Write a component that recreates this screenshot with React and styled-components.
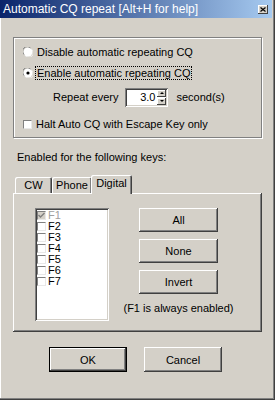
import React, { useState } from 'react';
import styled, { createGlobalStyle, css } from 'styled-components';

const Global = createGlobalStyle`
    html, body { margin: 0; padding: 0; background: #d4d0c8; }
    body { font-family: "Liberation Sans", Arial, sans-serif; font-size: 11px; color: #000; }
`;

const raised = css`
    box-shadow: inset -1px -1px #404040, inset 1px 1px #fff, inset -2px -2px #808080, inset 2px 2px #d4d0c8;
`;
const sunken = css`
    box-shadow: inset 1px 1px #808080, inset -1px -1px #fff, inset 2px 2px #404040, inset -2px -2px #d4d0c8;
`;

const Window = styled.div`
    width: 275px;
    height: 400px;
    box-sizing: border-box;
    background: #d4d0c8;
    display: flex;
    flex-direction: column;
    border-right: 1px solid #404040;
    border-bottom: 1px solid #404040;
    box-shadow: inset -1px -1px #808080, inset 1px 0 #fff;
`;

const TitleBar = styled.div`
    height: 18px;
    margin-right: 2px;
    background: linear-gradient(to right, #0a246a, #a6caf0);
    color: #fff;
    display: flex;
    align-items: center;
    justify-content: space-between;
    padding: 0 4px 0 3px;
    font-size: 12px;
    white-space: nowrap;
`;

const CloseBtn = styled.div`
    width: 10px;
    height: 9px;
    background: #d4d0c8;
    box-shadow: inset -1px -1px #404040, inset 1px 1px #fff;
    display: flex;
    align-items: center;
    justify-content: center;
    margin-top: 1px;
`;

const Body = styled.div`
    padding: 0 12px 0 13px;
    display: flex;
    flex-direction: column;
`;

const GroupBox = styled.div`
    margin-top: 19px;
    height: 101px;
    box-sizing: border-box;
    border: 1px solid #808080;
    box-shadow: inset 1px 1px #fff, 1px 1px #fff;
    padding: 4px 0 0 9px;
    display: flex;
    flex-direction: column;
`;

const Row = styled.div`
    height: 20px;
    display: flex;
    align-items: center;
    margin-top: ${({ top }) => top || 0}px;
    margin-left: ${({ indent }) => indent || 0}px;
`;

const Caption = styled.span`
    margin-left: 3px;
    padding: 0 1px;
    line-height: 12px;
    outline: ${({ focused }) => (focused ? '1px dotted #000' : 'none')};
    outline-offset: 0;
`;

const Radio = ({ on }) => (
    <svg width="10" height="10" viewBox="0 0 10 10">
        <circle cx="5" cy="5" r="4.5" fill="#fff" />
        <path d="M1 7.5 A4.5 4.5 0 0 1 7.5 1" stroke="#808080" fill="none" />
        <path d="M2.5 9 A4.5 4.5 0 0 0 9 2.5" stroke="#eee" fill="none" />
        {on && <circle cx="5" cy="5" r="1.6" fill="#000" />}
    </svg>
);

const Box = styled.span`
    width: 9px;
    height: 9px;
    box-sizing: border-box;
    flex: none;
    background: ${({ disabled }) => (disabled ? '#d4d0c8' : '#fff')};
    border-top: 1px solid #808080;
    border-left: 1px solid #808080;
    border-right: 1px solid #e8e8e8;
    border-bottom: 1px solid #e8e8e8;
    display: flex;
    align-items: center;
    justify-content: center;
`;

const Check = ({ color }) => (
    <svg width="7" height="7" viewBox="0 0 7 7">
        <path d="M0.5 3 L2.5 5 L6.5 1" stroke={color} strokeWidth="1.4" fill="none" />
    </svg>
);

const Spin = styled.div`
    margin: 0 8px 0 7px;
    width: 43px;
    height: 19px;
    box-sizing: border-box;
    background: #fff;
    ${sunken};
    display: flex;
    align-items: center;
    padding: 2px;
`;

const SpinValue = styled.span`
    flex: 1;
    text-align: right;
    padding-right: 2px;
`;

const SpinButtons = styled.div`
    width: 9px;
    height: 15px;
    display: flex;
    flex-direction: column;
    gap: 1px;
`;

const SpinBtn = styled.div`
    flex: 1;
    background: #d4d0c8;
    box-shadow: inset -1px -1px #404040, inset 1px 1px #fff;
    display: flex;
    align-items: center;
    justify-content: center;
`;

const Arrow = styled.span`
    width: 0;
    height: 0;
    border-left: 2px solid transparent;
    border-right: 2px solid transparent;
    ${({ up }) => (up ? 'border-bottom: 2px solid #000;' : 'border-top: 2px solid #000;')}
`;

const Label = styled.div`
    margin: 13px 0 0 4px;
    line-height: 13px;
`;

const TabStrip = styled.div`
    margin-top: 11px;
    height: 18px;
    display: flex;
    align-items: flex-end;
    padding-left: 2px;
    position: relative;
    z-index: 1;
`;

const Tab = styled.div`
    width: ${({ w }) => w}px;
    height: ${({ active }) => (active ? 19 : 16)}px;
    margin-bottom: ${({ active }) => (active ? -1 : 0)}px;
    box-sizing: border-box;
    background: #d4d0c8;
    border-top-left-radius: 2px;
    border-top-right-radius: 2px;
    box-shadow: inset 1px 1px #fff, inset -1px 0 #404040, inset -2px 0 #808080;
    display: flex;
    align-items: center;
    justify-content: center;
    padding-bottom: ${({ active }) => (active ? 3 : 0)}px;
    margin-left: ${({ active }) => (active ? -1 : 0)}px;
`;

const Panel = styled.div`
    height: 139px;
    box-sizing: border-box;
    ${raised};
    padding: 15px 0 0 22px;
    display: flex;
`;

const ListBox = styled.div`
    width: 74px;
    height: 113px;
    box-sizing: border-box;
    background: #fff;
    ${sunken};
    padding: 2px 0 0 2px;
`;

const Item = styled.div`
    height: 11px;
    line-height: 11px;
    display: flex;
    align-items: center;
    gap: 2px;
    color: ${({ disabled }) => (disabled ? '#a0a0a0' : '#000')};
    font-size: 11px;
`;

const Side = styled.div`
    margin-left: 30px;
    width: 79px;
    display: flex;
    flex-direction: column;
    align-items: center;
    gap: 7px;
`;

const Button = styled.button`
    width: ${({ w }) => w || 79}px;
    height: ${({ h }) => h || 24}px;
    border: none;
    padding: 0;
    background: #d4d0c8;
    font: inherit;
    color: #000;
    ${({ primary }) => (primary
        ? css`box-shadow: inset 0 0 0 1px #000, inset -2px -2px #404040, inset 2px 2px #fff, inset -3px -3px #808080;`
        : raised)}
    :focus { outline: none; }
`;

const Note = styled.div`
    margin-top: 1px;
    white-space: nowrap;
    line-height: 13px;
`;

const Footer = styled.div`
    margin-top: 15px;
    display: flex;
    gap: 17px;
    padding-left: 36px;
`;

const keys = ['F1', 'F2', 'F3', 'F4', 'F5', 'F6', 'F7'];

export default () => {
    const [tab] = useState('Digital');

    return (
        <Window>
            <Global />
            <TitleBar>
                <span>Automatic CQ repeat [Alt+H for help]</span>
                <CloseBtn>
                    <svg width="6" height="5" viewBox="0 0 6 5">
                        <path d="M0.5 0.5 L5.5 4.5 M5.5 0.5 L0.5 4.5" stroke="#000" strokeWidth="1.2" />
                    </svg>
                </CloseBtn>
            </TitleBar>
            <Body>
                <GroupBox>
                    <Row>
                        <Radio />
                        <Caption>Disable automatic repeating CQ</Caption>
                    </Row>
                    <Row top={1}>
                        <Radio on />
                        <Caption focused>Enable automatic repeating CQ</Caption>
                    </Row>
                    <Row top={4} indent={30}>
                        <span>Repeat every</span>
                        <Spin>
                            <SpinValue>3.0</SpinValue>
                            <SpinButtons>
                                <SpinBtn><Arrow up /></SpinBtn>
                                <SpinBtn><Arrow /></SpinBtn>
                            </SpinButtons>
                        </Spin>
                        <span>second(s)</span>
                    </Row>
                    <Row top={7}>
                        <Box />
                        <Caption>Halt Auto CQ with Escape Key only</Caption>
                    </Row>
                </GroupBox>
                <Label>Enabled for the following keys:</Label>
                <TabStrip>
                    {[['CW', 37], ['Phone', 40], ['Digital', 41]].map(([name, w]) => (
                        <Tab key={name} w={w} active={name === tab}>{name}</Tab>
                    ))}
                </TabStrip>
                <Panel>
                    <ListBox>
                        {keys.map((k, i) => (
                            <Item key={k} disabled={i === 0}>
                                <Box disabled={i === 0}>{i === 0 && <Check color="#808080" />}</Box>
                                {k}
                            </Item>
                        ))}
                    </ListBox>
                    <Side>
                        <Button>All</Button>
                        <Button>None</Button>
                        <Button>Invert</Button>
                        <Note>(F1 is always enabled)</Note>
                    </Side>
                </Panel>
                <Footer>
                    <Button primary w={78} h={25}>OK</Button>
                    <Button w={78} h={25}>Cancel</Button>
                </Footer>
            </Body>
        </Window>
    );
};
